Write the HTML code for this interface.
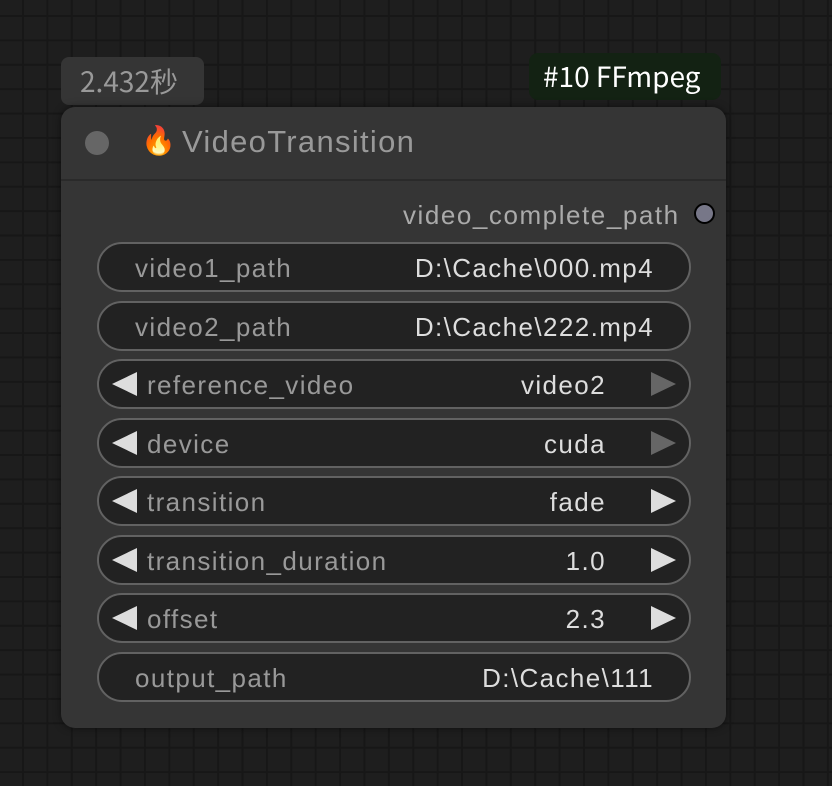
<!DOCTYPE html>
<html><head><meta charset="utf-8"><style>
*{margin:0;padding:0;box-sizing:border-box}
body{width:832px;height:786px;overflow:hidden;background-color:#1e1e1e;
background-image:linear-gradient(90deg,#171717 2px,transparent 2px),linear-gradient(180deg,#171717 2px,transparent 2px);
background-size:24.4px 24.4px;background-position:22px 15px;position:relative;
font-family:"Liberation Sans","Noto Sans CJK SC",sans-serif}
.a{position:absolute}
.badge1{left:61px;top:57px;width:143px;height:48px;background:#353535;border-radius:8px;color:#999;font-size:28px;font-family:"Noto Sans CJK SC",sans-serif;line-height:48px;padding-left:19px}
.badge2{left:529px;top:53px;width:192px;height:47px;background:#132213;border-radius:9px;color:#fff;font-size:28px;font-family:"Noto Sans CJK SC",sans-serif;line-height:46px;padding-left:14px}
.node{left:61px;top:107px;width:665px;height:621px;background:#353535;border-radius:14px;box-shadow:0 0 8px rgba(0,0,0,.5)}
.sep{left:61px;top:179px;width:665px;height:2px;background:#2a2a2a}
.dot{left:85px;top:131px;width:24px;height:24px;border-radius:50%;background:#666}
.title{left:182px;top:124px;font-size:31px;color:#999;letter-spacing:1.3px}
.out{left:403px;top:200px;font-size:26px;color:#aaa;letter-spacing:1.55px}
.odot{left:694px;top:203px;width:21px;height:21px;border-radius:50%;background:#778;border:2px solid #000}
.w{left:97px;width:594px;height:50px;border:2px solid #626262;border-radius:25px;background:#222;font-size:26px;line-height:48px;letter-spacing:1.4px}
.w .l{position:absolute;left:36px;color:#999}
.w .v{position:absolute;right:35px;color:#ddd}
.w.c .l{left:48px}
.w.c .v{right:83px}
.la{position:absolute;left:13px;top:11px;width:0;height:0;border-top:12px solid transparent;border-bottom:12px solid transparent;border-right:25px solid #ddd}
.ra{position:absolute;right:13px;top:11px;width:0;height:0;border-top:12px solid transparent;border-bottom:12px solid transparent;border-left:25px solid #ddd}
.ra.d{border-left-color:#666}
</style></head><body>
<div class="a badge1">2.432秒</div>
<div class="a badge2">#10 FFmpeg</div>
<div class="a node"></div>
<div class="a sep"></div>
<div class="a dot"></div>
<div class="a" style="left:141px;top:124px;font-size:28px">🔥</div>
<div class="a title">VideoTransition</div>
<div class="a out">video_complete_path</div>
<div class="a odot"></div>
<div class="a w" style="top:242px"><span class="l">video1_path</span><span class="v">D:\Cache\000.mp4</span></div>
<div class="a w" style="top:301px"><span class="l">video2_path</span><span class="v">D:\Cache\222.mp4</span></div>
<div class="a w c" style="top:359px"><i class="la"></i><span class="l">reference_video</span><span class="v">video2</span><i class="ra d"></i></div>
<div class="a w c" style="top:418px"><i class="la"></i><span class="l">device</span><span class="v">cuda</span><i class="ra d"></i></div>
<div class="a w c" style="top:476px"><i class="la"></i><span class="l">transition</span><span class="v">fade</span><i class="ra"></i></div>
<div class="a w c" style="top:535px"><i class="la"></i><span class="l">transition_duration</span><span class="v">1.0</span><i class="ra"></i></div>
<div class="a w c" style="top:593px"><i class="la"></i><span class="l">offset</span><span class="v">2.3</span><i class="ra"></i></div>
<div class="a w" style="top:652px"><span class="l">output_path</span><span class="v">D:\Cache\111</span></div>
</body></html>
